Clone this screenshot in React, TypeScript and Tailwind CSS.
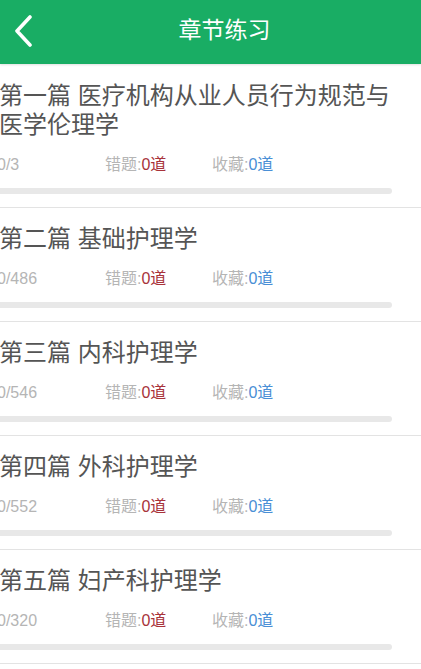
import React from "react";

const items = [
  { title: "第一篇 医疗机构从业人员行为规范与医学伦理学", total: "0/3" },
  { title: "第二篇 基础护理学", total: "0/486" },
  { title: "第三篇 内科护理学", total: "0/546" },
  { title: "第四篇 外科护理学", total: "0/552" },
  { title: "第五篇 妇产科护理学", total: "0/320" },
  { title: "第六篇 儿科护理学", total: "0/298" },
];

export default function App() {
  return (
    <div
      className="w-[421px] h-[669px] overflow-hidden bg-white"
      style={{ fontFamily: '"Liberation Sans", "Noto Sans CJK SC", sans-serif' }}
    >
      <header className="relative z-10 h-[64px] bg-[#19ad64] flex items-center shadow-[0_1px_2px_rgba(0,0,0,0.12)]">
        <div className="w-[44px] flex items-center justify-center pl-[4px] pb-[2px]">
          <svg width="22" height="32" viewBox="0 0 22 32" fill="none">
            <path
              d="M17 2 L4 16 L17 30"
              stroke="white"
              strokeWidth="3.6"
              strokeLinecap="round"
              strokeLinejoin="round"
            />
          </svg>
        </div>
        <div className="flex-1 text-center pr-[16px] pb-[4px] text-white text-[23px] leading-none">
          章节练习
        </div>
      </header>
      <div className="flex flex-col">
        {items.map((it, i) => (
          <div
            key={i}
            className={`border-b border-[#e3e3e3] pb-[13px] ${i === 0 ? "pt-[17px]" : "pt-[16px]"}`}
          >
            <div className="w-[396px] text-[24px] leading-[29px] text-[#555555] -ml-[1px]">
              {it.title}
            </div>
            <div className="mt-[16px] flex text-[16px] leading-[20px] -ml-[3px]">
              <span className="w-[108px] text-[#b5b5b5]">{it.total}</span>
              <span className="w-[107px] text-[#b5b5b5]">
                错题:<span className="text-[#a8323a]">0道</span>
              </span>
              <span className="text-[#b5b5b5]">
                收藏:<span className="text-[#4a8fd6]">0道</span>
              </span>
            </div>
            <div className="mt-[13px] h-[6px] w-[392px] bg-[#e8e8e8] rounded-r-full" />
          </div>
        ))}
      </div>
    </div>
  );
}
